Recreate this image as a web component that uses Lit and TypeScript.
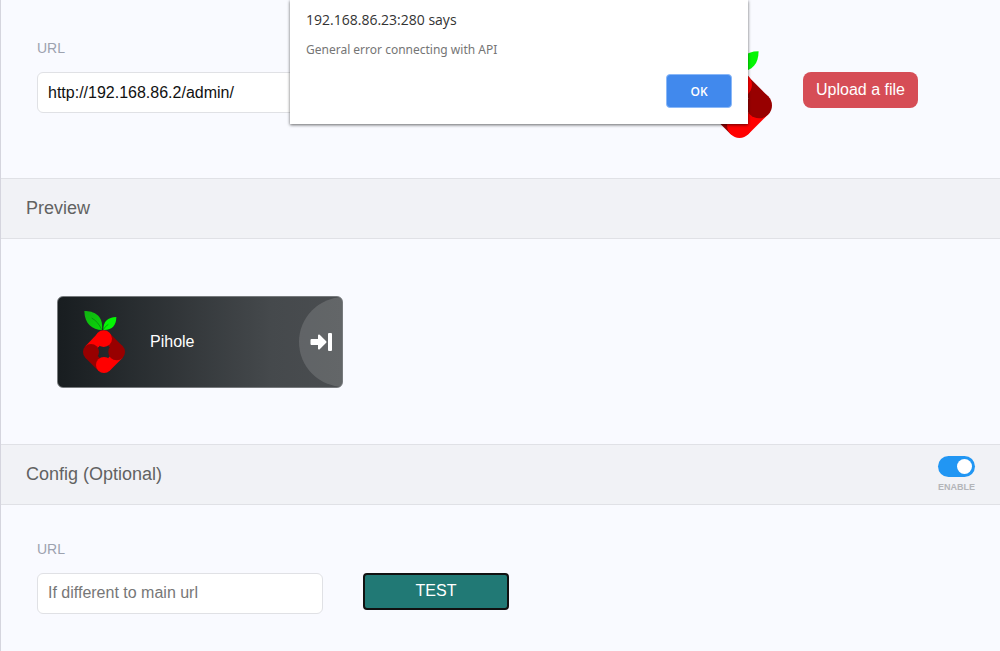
import { LitElement, html, svg, css } from "lit";
import { customElement } from "lit/decorators.js";

@customElement("pihole-logo")
export class PiholeLogo extends LitElement {
  static styles = css`
    :host { display: block; }
    svg { display: block; width: 100%; height: auto; }
  `;
  render() {
    return html`<svg viewBox="0 0 126 186" aria-hidden="true">
      <defs>
        <linearGradient id="leaf" x1="0" y1="0" x2="1" y2="1">
          <stop offset="0" stop-color="#12b212" /><stop offset="1" stop-color="#08d808" />
        </linearGradient>
      </defs>
      ${svg`
      <path fill="url(#leaf)" d="M4 0C32 0 62 12 57 57C28 56 5 40 4 0Z" />
      <path fill="#04f604" d="M100 18C100 42 88 58 61 57C60 33 74 18 100 18Z" />
      <path fill="none" stroke="#0a7a12" stroke-width="2" d="M26 21Q46 32 56 56M61 56Q66 46 76 40" />
      <path fill="#f00" d="M45 66L7 106L24 123L48 107L62 83Z" />
      <path fill="#980000" d="M7 140L46 179L63 162L48 138L24 123Z" />
      <path fill="#f00" d="M80 179L119 140L102 123L78 138L63 162Z" />
      <path fill="#980000" d="M119 106L79 66L62 83L78 107L102 123Z" />
      <circle cx="62" cy="83" r="25" fill="#f00" />
      <circle cx="24" cy="123" r="24" fill="#980000" />
      <circle cx="63" cy="162" r="24" fill="#f00" />
      <circle cx="101" cy="123" r="25" fill="#980000" />
      `}
    </svg>`;
  }
}

@customElement("app-root")
export class AppRoot extends LitElement {
  static styles = css`
    :host {
      display: block;
      min-height: 100vh;
      box-sizing: border-box;
      border-left: 1px solid #d5d5de;
      background: #f9faff;
      font-family: "Liberation Sans", Arial, sans-serif;
      font-size: 16px;
      color: #222;
      overflow-x: hidden;
    }
    * { box-sizing: border-box; }
    button { font: inherit; cursor: pointer; }
    .row { display: flex; align-items: flex-start; padding: 40px 36px; gap: 40px; }
    .main { padding-right: 82px; justify-content: space-between; }
    .field { display: flex; flex-direction: column; gap: 16px; width: 286px; }
    .field label { font-size: 14px; line-height: 16px; color: #9da2af; }
    .field input {
      width: 100%;
      height: 41px;
      padding: 0 10px;
      border: 1px solid #e0e1e5;
      border-radius: 6px;
      background: #fff;
      font: inherit;
      color: #111;
    }
    .field input::placeholder { color: #777; opacity: 1; }
    .picture { display: flex; align-items: center; gap: 31px; padding-top: 2px; }
    .large { width: 65px; }
    .upload {
      height: 36px;
      padding: 0 13px;
      border: 0;
      border-radius: 8px;
      background: #d64d56;
      color: #fff;
    }
    .bar {
      display: flex;
      align-items: center;
      justify-content: space-between;
      height: 61px;
      padding: 0 25px;
      border: solid #e0e1e6;
      border-width: 1px 0;
      background: #f1f2f6;
    }
    .bar h2 { margin: 0; font-size: 18px; line-height: 24px; font-weight: 400; color: #626262; }
    .preview { padding: 57px 56px 56px; }
    .card {
      position: relative;
      display: flex;
      align-items: center;
      gap: 25px;
      width: 286px;
      height: 92px;
      padding: 0 10px 0 25px;
      border: 1px solid #777a7d;
      border-radius: 6px;
      background: linear-gradient(90deg, #181d20, #45494c 75%, #4a4d50);
      color: #fff;
      text-decoration: none;
      overflow: hidden;
    }
    .card::before {
      content: "";
      position: absolute;
      top: 0;
      right: -47px;
      width: 90px;
      height: 90px;
      border-radius: 50%;
      background: #ffffff24;
    }
    .small { width: 42px; }
    .title { flex: 1; line-height: 20px; }
    .go { position: relative; width: 22px; height: 20px; }
    .toggle { display: flex; flex-direction: column; align-items: center; gap: 4px; font-size: 9px; line-height: 12px; font-weight: 700; color: #b4b5b9; }
    .toggle input {
      appearance: none;
      display: flex;
      align-items: center;
      width: 37px;
      height: 21px;
      margin: 0;
      padding: 0 3px;
      border-radius: 11px;
      background: #a9a9a9;
    }
    .toggle input::before { content: ""; width: 15px; height: 15px; border-radius: 50%; background: #fff; }
    .toggle input:checked { justify-content: flex-end; background: #2196f3; }
    .config { padding-top: 36px; padding-bottom: 36px; }
    .test {
      width: 146px;
      height: 37px;
      margin-top: 32px;
      border: 2px solid #111;
      border-radius: 4px;
      background: #217975;
      color: #fff;
    }
    .dialog {
      position: absolute;
      top: 0;
      left: 50%;
      width: 458px;
      margin: 0 0 0 -210px;
      padding: 8px 16px 16px;
      border: 0;
      background: #fff;
      box-shadow: 0 1px 3px #0009;
      font-family: "Open Sans", "Noto Sans", sans-serif;
    }
    .dialog h1 { margin: 0; font-size: 14px; line-height: 24px; font-weight: 400; color: #333; }
    .dialog p { margin: 8px 0 14px; font-family: "Noto Sans", sans-serif; font-size: 12px; line-height: 20px; color: #757575; }
    .ok {
      display: block;
      width: 66px;
      height: 34px;
      margin-left: auto;
      border: 1px solid #8ab8f8;
      border-radius: 4px;
      background: #4189ed;
      color: #fff;
      font-size: 12px;
      font-weight: 600;
    }
  `;
  render() {
    return html`
      <section class="row main">
        <div class="field">
          <label for="url">URL</label>
          <input id="url" type="text" value="http://192.168.86.2/admin/" />
        </div>
        <div class="picture">
          <pihole-logo class="large"></pihole-logo>
          <button class="upload" type="button">Upload a file</button>
        </div>
      </section>
      <header class="bar"><h2>Preview</h2></header>
      <section class="preview">
        <a class="card" href="#pihole">
          <pihole-logo class="small"></pihole-logo>
          <span class="title">Pihole</span>
          <svg class="go" viewBox="0 0 22 20" aria-hidden="true">
            <path fill="#fff" stroke="#fff" stroke-width="2" stroke-linejoin="round" d="M1.5 8H9V3.5L15.5 10L9 16.5V12H1.5Z" />
            <rect x="18" y="1" width="4" height="18" rx="1" fill="#fff" />
          </svg>
        </a>
      </section>
      <header class="bar">
        <h2>Config (Optional)</h2>
        <label class="toggle"><input type="checkbox" checked />ENABLE</label>
      </header>
      <section class="row config">
        <div class="field">
          <label for="override">URL</label>
          <input id="override" type="text" placeholder="If different to main url" />
        </div>
        <button class="test" type="button">TEST</button>
      </section>
      <dialog class="dialog" open aria-labelledby="says">
        <h1 id="says">192.168.86.23:280 says</h1>
        <p>General error connecting with API</p>
        <button class="ok" type="button">OK</button>
      </dialog>
    `;
  }
}
